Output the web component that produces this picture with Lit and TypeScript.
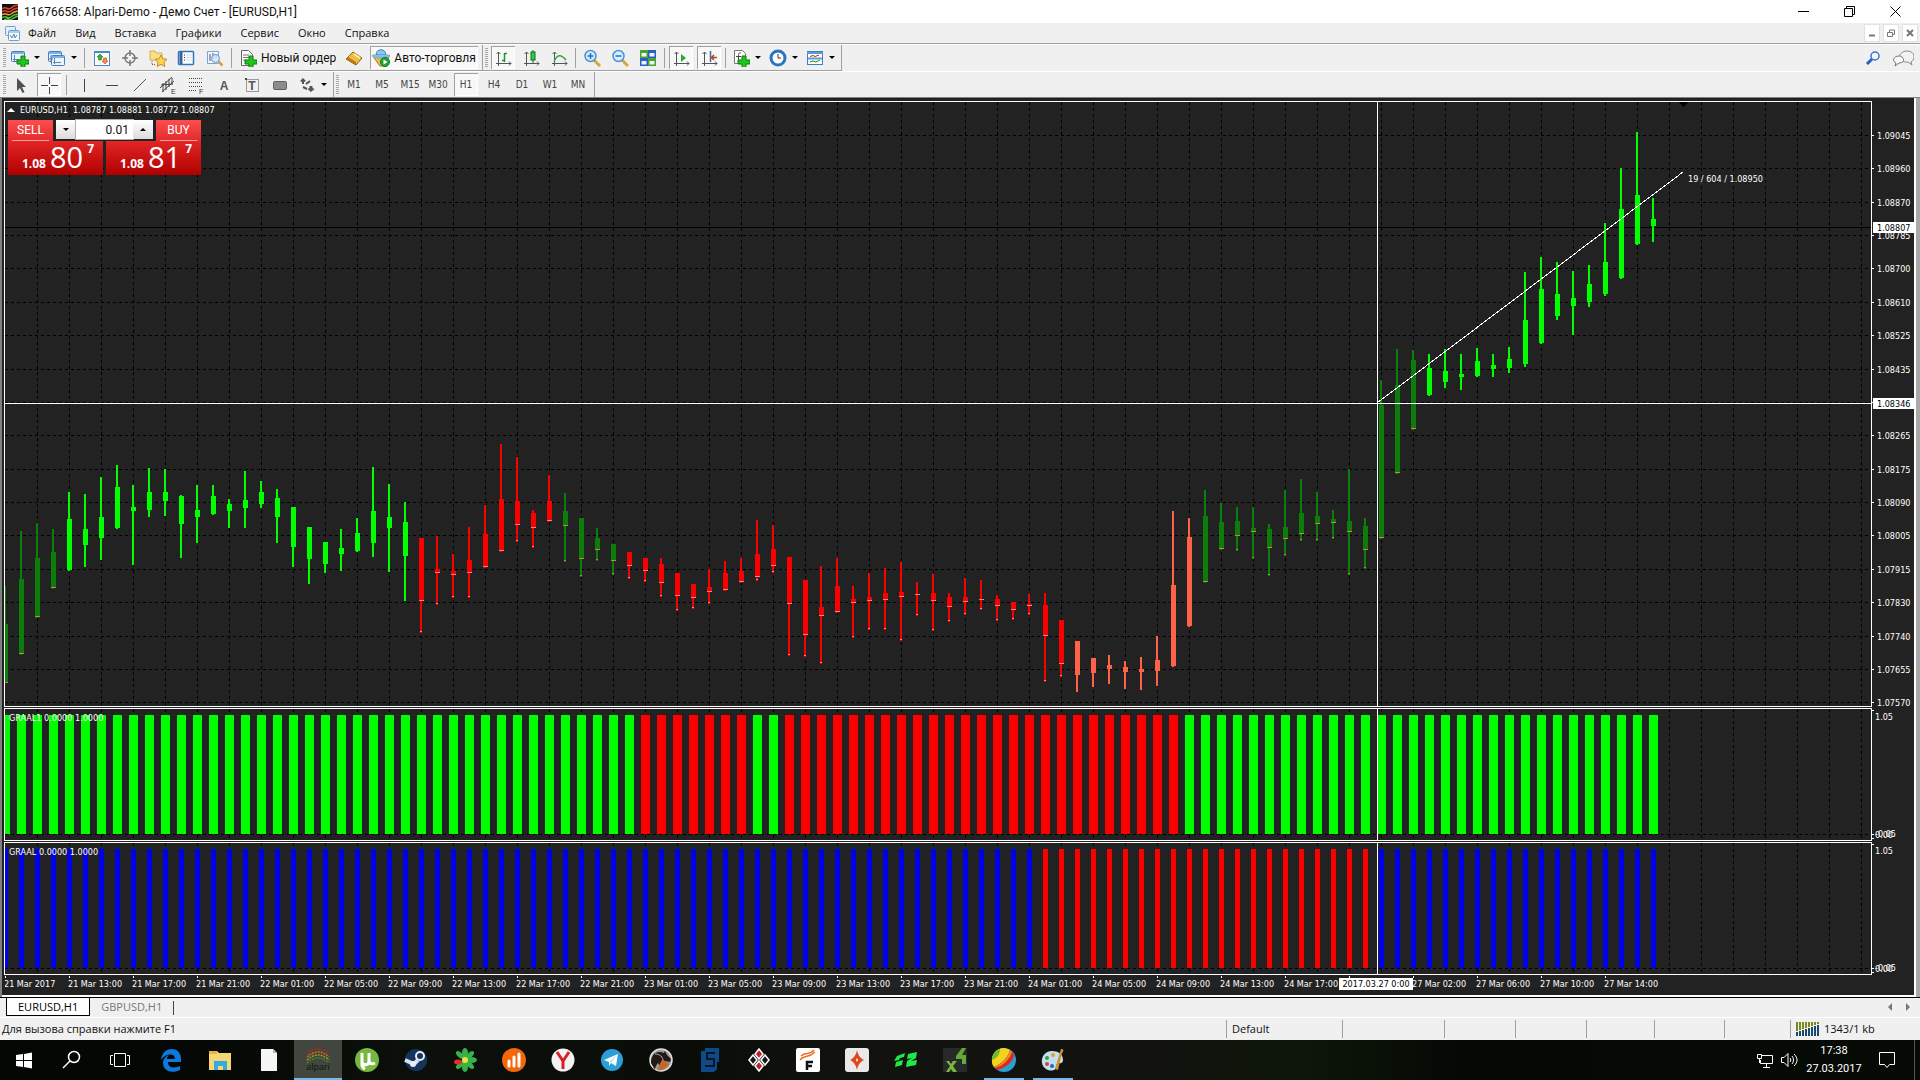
import { LitElement, html, svg, css, nothing, TemplateResult } from "lit";
import { customElement, property, state } from "lit/decorators.js";
import { classMap } from "lit/directives/class-map.js";

type Tone = "forest" | "lime" | "red" | "tomato";
type Candle = [high: number, top: number, bottom: number, low: number];

const STEP = 16;
const GRID_STEP = 32;

/* Runs of candles sharing one trend colour, in pane pixels. */
const RUNS: [Tone, Candle[]][] = [
  ["forest", [[586, 624, 683, 683], [531, 579, 654, 655], [523, 558, 617, 618], [529, 552, 588, 589]]],
  ["lime", [
    [492, 519, 570, 571], [494, 529, 545, 567], [477, 517, 538, 560], [465, 487, 528, 529], [485, 507, 511, 565],
    [468, 492, 510, 517], [469, 492, 501, 516], [495, 496, 524, 558], [485, 510, 517, 543], [485, 496, 514, 515],
    [499, 504, 511, 528], [471, 500, 508, 528], [481, 492, 504, 508], [489, 498, 517, 543], [507, 507, 547, 567],
    [527, 527, 559, 584], [542, 542, 564, 573], [529, 548, 554, 571], [518, 533, 551, 552], [467, 511, 543, 557],
    [484, 517, 528, 572], [502, 522, 556, 601],
  ]],
  ["red", [
    [538, 538, 601, 633], [536, 569, 573, 605], [554, 571, 575, 598], [527, 560, 573, 598], [505, 534, 567, 568],
    [444, 499, 551, 552], [457, 501, 525, 542], [510, 513, 528, 548], [475, 501, 521, 522],
  ]],
  ["forest", [[493, 511, 526, 562], [518, 518, 559, 577], [528, 538, 550, 561], [544, 544, 561, 575]]],
  ["red", [
    [552, 552, 566, 579], [558, 558, 571, 582], [558, 564, 583, 597], [573, 573, 596, 611], [584, 584, 598, 609],
    [569, 587, 592, 604], [561, 573, 590, 591], [558, 571, 582, 583], [520, 554, 577, 581], [525, 549, 566, 573],
    [557, 557, 604, 656], [580, 580, 635, 657], [566, 607, 616, 664], [558, 586, 612, 613], [586, 599, 603, 638],
    [573, 597, 601, 630], [568, 593, 600, 630], [562, 592, 597, 641], [582, 594, 595, 616], [574, 593, 601, 631],
    [593, 597, 607, 622], [578, 597, 602, 615], [580, 599, 600, 610], [595, 599, 606, 621], [602, 602, 610, 620],
    [594, 604, 606, 615], [593, 605, 636, 682], [620, 620, 664, 677],
  ]],
  ["tomato", [
    [641, 641, 675, 692], [658, 658, 673, 687], [655, 665, 669, 684], [661, 667, 672, 689], [657, 669, 672, 690],
    [636, 660, 671, 686], [511, 585, 666, 667], [518, 537, 626, 627],
  ]],
  ["forest", [
    [490, 516, 582, 583], [503, 522, 549, 550], [507, 521, 536, 551], [507, 528, 532, 559], [524, 529, 548, 576],
    [490, 527, 539, 556], [479, 513, 534, 541], [492, 516, 524, 541], [510, 519, 523, 539], [469, 521, 532, 575],
    [518, 526, 550, 569], [380, 405, 538, 539], [349, 385, 473, 474], [350, 360, 429, 430],
  ]],
  ["lime", [
    [354, 368, 395, 396], [349, 371, 382, 388], [354, 374, 377, 390], [348, 361, 376, 377], [354, 365, 369, 377],
    [347, 359, 368, 373], [272, 320, 364, 367], [257, 289, 343, 344], [262, 294, 316, 320], [271, 298, 306, 335],
    [265, 284, 302, 307], [223, 262, 294, 296], [168, 209, 278, 279], [132, 195, 244, 245], [198, 219, 226, 242],
  ]],
];

const PRICES: [string, number][] = [
  ["1.09045", 135], ["1.08960", 168], ["1.08870", 202], ["1.08785", 235], ["1.08700", 268], ["1.08610", 302],
  ["1.08525", 335], ["1.08435", 369], ["", 402], ["1.08265", 435], ["1.08175", 469], ["1.08090", 502],
  ["1.08005", 535], ["1.07915", 569], ["1.07830", 602], ["1.07740", 636], ["1.07655", 669], ["1.07570", 702],
];

const TIMES = [
  "21 Mar 2017", "21 Mar 13:00", "21 Mar 17:00", "21 Mar 21:00", "22 Mar 01:00", "22 Mar 05:00", "22 Mar 09:00",
  "22 Mar 13:00", "22 Mar 17:00", "22 Mar 21:00", "23 Mar 01:00", "23 Mar 05:00", "23 Mar 09:00", "23 Mar 13:00",
  "23 Mar 17:00", "23 Mar 21:00", "24 Mar 01:00", "24 Mar 05:00", "24 Mar 09:00", "24 Mar 13:00", "24 Mar 17:00",
  "", "27 Mar 02:00", "27 Mar 06:00", "27 Mar 10:00", "27 Mar 14:00",
];

/* [colour class, number of bars] */
const GRAAL1: [string, number][] = [["lime", 40], ["red", 7], ["lime", 2], ["red", 25], ["lime", 30]];
const GRAAL: [string, number][] = [["blue", 65], ["red", 21], ["blue", 18]];

const CROSS_X = 1372;
const TOP = 102;

const plusBig = svg`<path d="M10 7h4v4h4v4h-4v4h-4v-4H6v-4h4z" fill="#1fc61f" stroke="#0a7d0a"/>`;
const axes = svg`<path d="M4.500 3v14M2 14.500h15M2.500 5l2-2 2 2M15 12.500l2 2-2 2" fill="none" stroke="#555"/>`;
const winBack = (x: number, y: number) => svg`<rect x=${x + 0.5} y=${y + 0.5} width="13" height="10" rx="1" fill="#e9f4ff" stroke="#3f7fbf"/><path d=${`M${x + 1} ${y + 2}h12`} stroke="#7db1e3" stroke-width="2"/>`;

const ICONS: Record<string, TemplateResult> = {
  newChart: svg`${winBack(0, 2)}<path d="M3.500 6v6M2 10.500h6" stroke="#5d86b0"/>${plusBig}`,
  profiles: svg`${winBack(0, 2)}${winBack(3, 6)}<path d="M3 6v6M1 10h4M6.500 9v6M5 13.500h8" stroke="#5d86b0"/>`,
  market: svg`<rect x="1.500" y="2.500" width="15" height="14" fill="#fff" stroke="#4b8ac9"/><path d="M1 3h16" stroke="#4b8ac9" stroke-width="2"/><path d="M7 5l3 3H8.500v3h-3V8H4z" fill="#35b335" stroke="#1c7d1c" stroke-width=".6"/><path d="M12 15l-3-3h1.500V9h3v3H15z" fill="#f58b4a" stroke="#b84a12" stroke-width=".6"/>`,
  target: svg`<circle cx="9" cy="9" r="5" fill="none" stroke="#777" stroke-width="1.500"/><path d="M9 1v6M9 11v6M1 9h6M11 9h6" stroke="#777" stroke-width="1.500"/>`,
  favorites: svg`<path d="M1 2h5l1 2h6v7H1z" fill="#f7e08c" stroke="#d9ae45"/><path d="M3 12v4M3 15.500h4" stroke="#666" stroke-dasharray="1 1"/><path d="M12 6l1.800 3.800 4.200.5-3 2.900.8 4.200-3.800-2-3.800 2 .8-4.200-3-2.900 4.200-.5z" fill="#ffd54a" stroke="#c08a20"/>`,
  navigator: svg`<rect x="1.500" y="2.500" width="15" height="13" rx="1" fill="#fff" stroke="#2e76bd" stroke-width="1.500"/><path d="M4 3v12" stroke="#3a5f9a" stroke-width="3"/><path d="M7 6h1M7 8.500h1M7 11h1" stroke="#333"/><path d="M9 6h6M9 8.500h6M9 11h6" stroke="#cfe0f1"/>`,
  tester: svg`<path d="M2.500 2.500h11v12h-11z" fill="#eef5fc" stroke="#7aa5d0"/><path d="M5 5v7M8 4v6M11 5v4" stroke="#557"/><circle cx="10.500" cy="9.500" r="4" fill="#cfe6fb" fill-opacity=".8" stroke="#6b9cc9"/><path d="M13.500 12.500l4 4" stroke="#d3a035" stroke-width="2.500"/>`,
  order: svg`<path d="M2.500 1.500h7l4 4v11h-11z" fill="#fff" stroke="#666"/><path d="M4 6h6M4 8.500h6M4 11h4" stroke="#777"/>${plusBig}`,
  book: svg`<path d="M1 10l7-7 9 6-6 7z" fill="#f0bd3c" stroke="#946311"/><path d="M1 10l10 6v-3L3 8z" fill="#b57a17"/><path d="M9 5l6 4" stroke="#fff0ae" stroke-width="2"/>`,
  expert: svg`<path d="M0 6c3 4 15 4 18 0l-6 11H8z" fill="#e9bd4d" stroke="#a3781b"/><path d="M4 6c0-7 10-7 10 0z" fill="#8cc8ef" stroke="#3783b8"/><path d="M1 6c3 3 13 3 16 0" stroke="#7abce4" stroke-width="2.500" fill="none"/><circle cx="13" cy="13" r="4.500" fill="#22a83a" stroke="#0b7a1e"/><path d="M11.500 10.500l4 2.500-4 2.500z" fill="#fff"/>`,
  bars: svg`${axes}<path d="M10.500 4v9M10.500 4.500H13M8 11.500h2.500" stroke="#1a9a2a" stroke-width="1.500" fill="none"/>`,
  candles: svg`${axes}<path d="M11 1v13" stroke="#116b1c"/><rect x="9" y="3" width="4" height="8" fill="#2bd040" stroke="#116b1c"/>`,
  line: svg`${axes}<path d="M4 13c3-8 7-8 12-2" stroke="#35a345" stroke-width="1.500" fill="none"/>`,
  zoomIn: svg`<path d="M11 11l6 6" stroke="#d2aa36" stroke-width="3"/><circle cx="7.500" cy="7" r="5.500" fill="#d6ecff" stroke="#4d93d3" stroke-width="1.500"/><path d="M4.500 7h6M7.500 4v6" stroke="#2a72b8" stroke-width="1.500"/>`,
  zoomOut: svg`<path d="M11 11l6 6" stroke="#d2aa36" stroke-width="3"/><circle cx="7.500" cy="7" r="5.500" fill="#d6ecff" stroke="#4d93d3" stroke-width="1.500"/><path d="M4.500 7h6" stroke="#2a72b8" stroke-width="1.500"/>`,
  tiles: svg`<path d="M1 1h8v8H1zM9 9h8v8H9z" fill="#4aa52a"/><path d="M9 1h8v8H9zM1 9h8v8H1z" fill="#2a5fc4"/><path d="M2.500 4h5v3.500h-5zM10.500 4h5v3.500h-5zM2.500 12h5v3.500h-5zM10.500 12h5v3.500h-5z" fill="#eaf3ff"/>`,
  scroll: svg`${axes}<path d="M9 5l5 4-5 4z" fill="#1fae35"/>`,
  shift: svg`${axes}<path d="M10.500 2v11" stroke="#2f6fb5" stroke-width="1.500"/><path d="M17 8.500h-5M14 6l-2.500 2.500L14 11" stroke="#b4441a" stroke-width="1.500" fill="none"/>`,
  indicator: svg`<path d="M2.500 1.500h8l3 3v10h-11z" fill="#fff" stroke="#777"/><path d="M9 4c-2-1-2.500 1-2.500 3v5M4 7.500h5" stroke="#444" fill="none"/>${plusBig}`,
  period: svg`<circle cx="9" cy="9" r="7" fill="#fff" stroke="#2a74c0" stroke-width="3"/><path d="M9 5v4h3" stroke="#333" fill="none"/>`,
  template: svg`<rect x="1.500" y="2.500" width="15" height="13" fill="#fff" stroke="#3f7fbf"/><path d="M1 4h16M2 9.500h14" stroke="#5b9bd8" stroke-width="2"/><path d="M4 7.500l3-1 2 1 4-1.500" stroke="#933" fill="none"/><path d="M4 13l3-1 3 1 4-2" stroke="#282" fill="none"/>`,
  search: svg`<path d="M3 15l5-5" stroke="#2a5fc4" stroke-width="3"/><circle cx="11" cy="7" r="4" fill="#f4f9ff" stroke="#3b74d4" stroke-width="1.500"/>`,
  cursor: svg`<path d="M5 2v13l3-3 2.500 5 2-1-2.500-5h4z" fill="#505050"/>`,
  cross: svg`<path d="M9.500 1v7M9.500 11v7M1 9.500h7M11 9.500h7" stroke="#444"/>`,
  vline: svg`<path d="M9.500 3v13" stroke="#444"/>`,
  hline: svg`<path d="M3 9.500h12" stroke="#444"/>`,
  trend: svg`<path d="M3 15L15 3" stroke="#555"/>`,
  channel: svg`<path d="M1 12L13 1M3 16L15 5M4 7v9M7 5v9M10 3v8M13 2v6M2 9l12-1" stroke="#444"/><text class="tiny" x="12" y="18">E</text>`,
  fibo: svg`<path d="M2 2.500h14M2 6.500h14M2 10.500h14M2 14.500h8" stroke="#444" stroke-dasharray="1 1"/><text class="tiny" x="12" y="18">F</text>`,
  letter: svg`<text class="glyph" x="9" y="14" text-anchor="middle">A</text>`,
  label: svg`<rect x="3.500" y="3.500" width="12" height="12" fill="none" stroke="#444" stroke-dasharray="1 1"/><path d="M2 2h2v2H2z" fill="#444"/><text class="glyph" x="9" y="14" text-anchor="middle">T</text>`,
  rect: svg`<rect x="2.500" y="5.500" width="13" height="8" rx="1" fill="#8c8c8c" stroke="#5e5e5e"/>`,
  arrows: svg`<path d="M5 2l3 3-2 1v2H4V6L2 5z" fill="#555"/><path d="M13 16l3.500-3-2-1v-2h-3v2l-2 1z" fill="#555"/><path d="M8 8l4-3M5 11l4 2" stroke="#555" stroke-width="2"/>`,
};

const bigIcon = (body: TemplateResult) => html`<svg class="app-icon" viewBox="0 0 24 24" aria-hidden="true">${body}</svg>`;

const TASKS: { name: string; art: TemplateResult; state?: string }[] = [
  { name: "Edge", art: svg`<path d="M2 12C3 4 8 1 13 1c6 0 9 5 9 10v3H9c0 7 8 6 12 4v4c-8 4-17 1-17-7 0-4 3-7 6-8-2 2-2 3-2 4h8c0-6-9-6-14 1z" fill="#0a7bdc"/>` },
  { name: "Explorer", art: svg`<path d="M1 3h8l2 2h12v17H1z" fill="#f5d876"/><path d="M1 3h8v3H1z" fill="#e5b93c"/><path d="M6 13h13v9h-4v-4h-5v4H6z" fill="#36a9e0"/>` },
  { name: "Document", art: svg`<path d="M4 1h12l4 4v18H4z" fill="#f5f5f5"/><path d="M16 1v4h4z" fill="#bbb"/>` },
  { name: "Alpari", state: "active", art: svg`<path d="M1 6Q12-4 23 6" stroke="#b3261e" fill="none" stroke-width="1.500" stroke-dasharray="2 1"/><path d="M1 9Q12-1 23 9" stroke="#d06a20" fill="none" stroke-width="1.500" stroke-dasharray="2 1"/><path d="M1 12Q12 2 23 12" stroke="#9c9c20" fill="none" stroke-width="1.500" stroke-dasharray="2 1"/><path d="M1 15Q12 5 23 15" stroke="#3c8a2a" fill="none" stroke-width="1.500" stroke-dasharray="2 1"/><text class="brand" x="12" y="22" text-anchor="middle">alpari</text>` },
  { name: "uTorrent", art: svg`<circle cx="12" cy="12" r="12" fill="#76b83f"/><path d="M7 5v8c0 5 7 5 7 0V5M14 12c0 5 4 4 6 3M7 10c0 6-1 9 3 11" stroke="#fff" stroke-width="3" fill="none"/>` },
  { name: "Steam", art: svg`<circle cx="12" cy="12" r="11" fill="#15345e"/><path d="M1 12l9 4 4-4" stroke="#d8e2ee" stroke-width="4" fill="none"/><circle cx="16" cy="8" r="4" fill="#15345e" stroke="#e8eef5" stroke-width="2"/><circle cx="9" cy="16" r="3" fill="#e8eef5"/>` },
  { name: "ICQ", art: svg`<g fill="#35b34a"><ellipse cx="12" cy="5" rx="3" ry="5"/><ellipse cx="12" cy="19" rx="3" ry="5"/><ellipse cx="19" cy="12" rx="5" ry="3"/><ellipse cx="17" cy="7" rx="2.500" ry="5" transform="rotate(45 17 7)"/><ellipse cx="17" cy="17" rx="2.500" ry="5" transform="rotate(-45 17 17)"/><ellipse cx="7" cy="17" rx="2.500" ry="5" transform="rotate(45 7 17)"/><ellipse cx="7" cy="7" rx="2.500" ry="5" transform="rotate(-45 7 7)"/></g><ellipse cx="5" cy="14" rx="4" ry="2.500" fill="#e0302a"/><circle cx="12" cy="12" r="3" fill="#f4e03a"/>` },
  { name: "Analytics", art: svg`<circle cx="12" cy="12" r="12" fill="#f4660a"/><path d="M7 18v-5M12 18V9M17 18V6" stroke="#fff" stroke-width="3" stroke-linecap="round"/>` },
  { name: "Yandex", art: svg`<circle cx="12" cy="12" r="11.500" fill="#f3f3f3"/><path d="M6 4l6 9 6-9M12 12v9" stroke="#d8202a" stroke-width="3" fill="none"/>` },
  { name: "Telegram", art: svg`<circle cx="12" cy="12" r="11" fill="#2c9fd8"/><path d="M4 12l14-6-2 12-5-3-2 3v-4z" fill="#fff"/><path d="M9 14l8-7-6 8z" fill="#b8dcf0"/>` },
  { name: "Stallion", art: svg`<circle cx="12" cy="12" r="11" fill="#9a9a9a" stroke="#ddd" stroke-width="1.500"/><path d="M2 15c0-9 6-13 13-10l1-2 2 4 4 4-1 3-5-1-5 9H9c3-3 2-5 0-7-2 2-3 5-3 7z" fill="#241812"/><path d="M8 22c4-4 2-8 6-10l6 3c-1 4-6 8-12 7z" fill="#c4682a"/><path d="M6 6c5 0 8 3 8 7" stroke="#aaa" fill="none"/>` },
  { name: "S5", art: svg`<path d="M7 0h14v14h-2v7l-3 3H3V3h4z" fill="#0c4a8a"/><path d="M17 5H9v6h7v7H7" stroke="#0b1420" stroke-width="2" fill="none"/>` },
  { name: "Cards", art: svg`<g stroke="#fff" stroke-width="1.500"><path d="M12 1l4 5-4 5-4-5z" fill="#c3202a"/><path d="M12 13l4 5-4 5-4-5z" fill="#c3202a"/><path d="M6 7l4 5-4 5-4-5z" fill="#181818"/><path d="M18 7l4 5-4 5-4-5z" fill="#181818"/></g>` },
  { name: "Forex", art: svg`<rect width="24" height="24" rx="2" fill="#fff"/><path d="M4 12c4-6 8-1 15-8M5 8c5-5 8 0 13-6" stroke="#e8702a" stroke-width="1.500" fill="none"/><path d="M11 22v-8h6M11 18h5" stroke="#111" stroke-width="2.500" fill="none"/>` },
  { name: "Spark", art: svg`<rect width="24" height="24" rx="3" fill="#e9e9e9"/><path d="M12 2c1 5 3 8 7 10-4 2-6 5-7 10-1-5-3-8-7-10 4-2 6-5 7-10z" fill="#e0461e"/><path d="M12 10l1 2-1 2-1-2z" fill="#fff"/>` },
  { name: "FX", art: svg`<path d="M3 8l8-3-1 4-4 1-1 2-5 1zM2 14l7-2-1 5-7 2zM14 6l9-2-1 6-5 3 6-1-1 5-10 2 1-6 5-3-5 1z" fill="#1fe84a"/>` },
  { name: "X4", art: svg`<rect width="24" height="24" fill="#262a2a"/><path d="M3 13h3l2 3 2-3h4l-4 5 4 6h-4l-2-3-2 3H3l4-6z" fill="#7ab83a"/><path d="M19 0h4l-4 7h4v9h-4v-5h-6V8z" fill="#66a83a"/>` },
  { name: "Stripe", state: "running", art: svg`<circle cx="12" cy="12" r="12" fill="#2a9fd0"/><path d="M12 0C4 0-1 7 0 14c0 2 1 4 2 5C10 16 17 8 18 2c-2-1-4-2-6-2z" fill="#f4d21e"/><path d="M8 1C3 3 0 7 0 12c5-2 8-6 8-11z" fill="#6cb82e"/><path d="M18 2C17 8 10 16 2 19l3 3C14 20 22 13 22 6z" fill="#e0281e"/><path d="M18 2c-1 5-6 12-13 16l-3 1 1 1C11 18 18 11 20 4z" fill="#ee8a1e"/>` },
  { name: "Paint", state: "running", art: svg`<path d="M11 3C4 3 0 9 1 15c1 6 8 9 12 7 3-1 1-4 3-6 2-1 6 0 6-4 0-6-5-9-11-9z" fill="#bfe0f2"/><circle cx="6" cy="10" r="2" fill="#3a9a3a"/><circle cx="6" cy="16" r="2" fill="#e04030"/><circle cx="12" cy="7" r="2" fill="#e8a020"/><circle cx="11" cy="18" r="2" fill="#3060c0"/><path d="M20 1c3 0 3 2 1 4L17 22l-3-1L19 4z" fill="#d09030"/>` },
];

@customElement("chart-pane")
export class ChartPane extends LitElement {
  @property() kind: "price" | "bars" = "bars";
  @property() heading = "";
  @property({ attribute: false }) bars: [string, number][] = [];
  @property({ type: Number }) thickness = 9;

  static styles = css`
    :host { display: grid; grid-template-columns: minmax(0, 1fr) 42px; min-height: 0; }
    .plot { border: 1px solid #fff; position: relative; overflow: hidden; min-width: 0; }
    .surface, .axis { display: block; width: 100%; height: 100%; }
    .axis-box { position: relative; min-height: 0; }
    .surface { position: absolute; inset: 0; }
    .axis { position: absolute; inset: 0; overflow: visible; }
    .grid { stroke: #000; stroke-dasharray: 3 3; }
    .bid { stroke: #000; }
    .cross { stroke: #fff; }
    .forest { fill: #0a7d0a; }
    .lime { fill: #00ff00; }
    .red { fill: #fb0000; }
    .tomato { fill: #ff6347; }
    .blue { fill: #0000f0; }
    .tip-forest { fill: #c8863c; }
    .tip-red { fill: #ff8080; }
    text, .heading { font: 9px/12px "DejaVu Sans Condensed", "DejaVu Sans", sans-serif; }
    text { fill: #fff; }
    .dark { fill: #000; }
    .tag { fill: #fff; }
    .heading { position: absolute; left: 4px; top: 3px; color: #fff; }
  `;

  private gridLines() {
    const lines: TemplateResult[] = [];
    for (let x = GRID_STEP; x < 3840; x += GRID_STEP) {
      lines.push(svg`<line class="grid" x1=${x + 0.5} x2=${x + 0.5} y1="0" y2="100%"></line>`);
    }
    return lines;
  }

  private candles() {
    let i = 0;
    return RUNS.map(([tone, list]) => list.map(([high, top, bottom, low]) => {
      const x = STEP * i++;
      const tip = tone === "red" || tone === "forest";
      return svg`
        <rect class=${tone} x=${x - 1} y=${high - TOP} width="2" height=${low - high}></rect>
        <rect class=${tone} x=${x - 2} y=${top - TOP} width="5" height=${bottom - top}></rect>
        ${tip ? svg`<rect class=${"tip-" + tone} x=${x - 2} y=${bottom - TOP - 1} width="5" height="1"></rect>` : nothing}
        ${tip && low - bottom > 2 ? svg`<rect class=${"tip-" + tone} x=${x - 1} y=${low - TOP - 2} width="2" height="1"></rect>` : nothing}`;
    }));
  }

  private histogram() {
    let i = 0;
    const half = (this.thickness - 1) / 2;
    return this.bars.map(([tone, count]) => Array.from({ length: count }, () =>
      svg`<rect class=${tone} x=${STEP * i++ - half} y="6" width=${this.thickness} height="119"></rect>`));
  }

  private renderPrice() {
    return html`
      <div class="plot">
        <svg class="surface" shape-rendering="crispEdges" role="img" aria-label="EURUSD H1">
          ${this.gridLines()}
          ${PRICES.map(([, y]) => svg`<line class="grid" x1="0" x2="100%" y1=${y - TOP + 0.5} y2=${y - TOP + 0.5}></line>`)}
          <line class="bid" x1="0" x2="100%" y1="125.500" y2="125.500"></line>
          ${this.candles()}
          <path d="M1673 0h10l-5 5z"></path>
          <line class="cross" x1=${CROSS_X + 0.5} x2=${CROSS_X + 0.5} y1="0" y2="100%"></line>
          <line class="cross" x1="0" x2="100%" y1="301.500" y2="301.500"></line>
          <line class="cross" x1=${CROSS_X} x2="1678" y1="301" y2="70"></line>
          <text x="1683" y="80">19 / 604 / 1.08950</text>
        </svg>
      </div>
      <div class="axis-box">
        <svg class="axis" shape-rendering="crispEdges">
          ${PRICES.map(([label, y]) => svg`
            <line class="cross" x1="0" x2="2" y1=${y - 100.5} y2=${y - 100.5}></line>
            <text x="5" y=${y - 97}>${label}</text>`)}
          <rect class="tag" x="1" y="121" width="41" height="11"></rect>
          <text class="dark" x="5" y="130">1.08807</text>
          <rect class="tag" x="1" y="297" width="41" height="11"></rect>
          <text class="dark" x="5" y="306">1.08346</text>
        </svg>
      </div>`;
  }

  private renderBars() {
    return html`
      <div class="plot">
        <svg class="surface" shape-rendering="crispEdges" role="img" aria-label=${this.heading}>
          ${this.gridLines()}
          <line class="grid" x1="0" x2="100%" y1="125.500" y2="125.500"></line>
          ${this.histogram()}
          <line class="cross" x1=${CROSS_X + 0.5} x2=${CROSS_X + 0.5} y1="0" y2="100%"></line>
        </svg>
        <div class="heading">${this.heading}</div>
      </div>
      <div class="axis-box">
        <svg class="axis" shape-rendering="crispEdges">
          <path class="cross" d="M0 2.500h2M0 126.500h2M0 130.500h2"></path>
          <text x="3" y="12">1.05</text>
          <text x="3" y="130">0.00</text>
          <text x="3" y="129">-0.05</text>
        </svg>
      </div>`;
  }

  render() {
    return this.kind === "price" ? this.renderPrice() : this.renderBars();
  }
}

@customElement("app-root")
export class AppRoot extends LitElement {
  @state() private timeframe = "H1";
  @state() private volume = "0.01";

  static styles = css`
    :host {
      display: flex; flex-direction: column; min-height: 100vh; background: #f0f0f0; color: #111;
      font: 11px/16px "Open Sans", "Noto Sans", sans-serif; overflow: hidden;
    }
    button, input { font: inherit; color: inherit; border: 0; padding: 0; margin: 0; background: none; border-radius: 0; }
    svg { display: block; flex: none; }
    .titlebar { display: flex; align-items: center; height: 23px; background: #fff; padding-left: 2px; padding-right: 2px; }
    .titlebar .logo { width: 16px; height: 16px; margin-right: 6px; }
    .caption { flex: 1; font: 12px/16px Roboto, sans-serif; margin: 0; }
    .win { display: flex; }
    .win button { width: 46px; height: 23px; display: grid; place-items: center; }
    .win svg { width: 11px; height: 11px; }
    .menubar { display: flex; align-items: center; height: 20px; padding-left: 5px; border-bottom: 1px solid #a0a0a0; }
    .menubar .doc { width: 15px; height: 15px; margin-right: 8px; }
    .menus { display: flex; flex: 1; gap: 19px; }
    .mdi { display: flex; gap: 3px; padding-right: 2px; }
    .mdi button { width: 16px; height: 18px; background: #fff; border: 1px solid #e2e2e2; display: grid; place-items: center; }
    .mdi svg { width: 8px; height: 8px; }
    .toolbar { display: flex; align-items: center; height: 26px; border-top: 1px solid #fff; font: 12px/16px Roboto, sans-serif; }
    .toolbar.second { height: 25px; }
    .group { display: flex; align-items: center; height: 26px; padding-left: 2px; padding-right: 2px; border-right: 1px solid #a0a0a0; border-bottom: 1px solid #a0a0a0; box-sizing: border-box; }
    .group.low { height: 25px; border-bottom: 0; }
    .group:first-child { padding-left: 3px; }
    .grip { width: 3px; height: 20px; margin-right: 1px; background: repeating-linear-gradient(#a8a8a8 0 1px, #f0f0f0 1px 2px); }
    .tool { display: flex; align-items: center; justify-content: center; min-width: 24px; height: 23px; margin: 0 2px; box-sizing: border-box; }
    .tool svg { width: 18px; height: 18px; }
    .tool.drop { min-width: 33px; gap: 5px; }
    .tool.wide { gap: 4px; padding: 0 2px; }
    .tool.on { background: #f8f8f8; box-shadow: inset 1px 1px #a0a0a0, inset -1px -1px #fff; }
    .caret { width: 0; height: 0; border: 3px solid transparent; border-top-color: #000; border-bottom: 0; }
    .sep { width: 1px; height: 20px; margin: 0 3px; background: #a0a0a0; }
    .tf { font: 10px/16px "DejaVu Sans Condensed", "DejaVu Sans", sans-serif; color: #444; }
    .tiny { font: 7px "Liberation Sans", sans-serif; fill: #333; }
    .glyph { font: bold 12px "Liberation Sans", sans-serif; fill: #555; }
    .group.charts .sep { margin: 0 2px; }
    .tools-right { margin-left: auto; display: flex; gap: 8px; padding-right: 6px; }
    .tools-right svg { width: 22px; height: 18px; }
    .desk { flex: 1; display: flex; border-top: 1px solid #808080; border-left: 2px solid #808080; background: #a8a8a8; min-height: 0; }
    .chart {
      flex: 1; min-width: 0; margin-right: 4px; background: #222; border-right: 2px solid #fff; border-bottom: 2px solid #fff;
      padding: 3px 0 0 2px; display: grid; grid-template-rows: minmax(606px, 1fr) 133px 133px 19px; row-gap: 1px; position: relative;
    }
    .times { display: flex; position: relative; margin: 0 42px 0 1px; overflow: hidden; }
    .times span, .now { font: 9px/13px "DejaVu Sans Condensed", "DejaVu Sans", sans-serif; white-space: nowrap; }
    .times span { width: 64px; flex: none; color: #fff; margin-left: -1px; margin-right: 1px; }
    .times span::before { content: ""; display: block; width: 1px; height: 2px; background: #fff; margin-left: 1px; }
    .now { position: absolute; left: 1334px; top: 2px; width: 74px; height: 12px; line-height: 12px; background: #fff; color: #000; text-align: center; }
    .quote { position: absolute; left: 5px; top: 6px; display: flex; align-items: center; gap: 5px; color: #fff; font: 9px/12px "DejaVu Sans Condensed", "DejaVu Sans", sans-serif; white-space: pre; }
    .quote::before { content: ""; border: 4px solid transparent; border-top: 0; border-bottom-color: #fff; }
    .deal { position: absolute; left: 6px; top: 22px; display: flex; gap: 3px; font: 12px/16px Roboto, sans-serif; }
    .side { width: 95px; height: 55px; display: flex; flex-direction: column; color: #fff; background: linear-gradient(#ff4c4c, #e02c2c 38%, #e02424 40%, #b00000); }
    .side .name { width: 45px; height: 20px; box-sizing: border-box; line-height: 20px; }
    .side .name::after { content: ""; display: block; margin: 0 4px; height: 1px; background: #ff9a9a; }
    .side.buy .name { align-self: flex-end; }
    .rate { display: flex; align-items: flex-end; justify-content: center; gap: 4px; height: 33px; width: 100%; padding-left: 5px; box-sizing: border-box; }
    .rate b { font: bold 12px/18px "Open Sans", sans-serif; }
    .rate strong { font: 29px/32px "Open Sans", sans-serif; }
    .rate sup { font: bold 12px/18px "Open Sans", sans-serif; align-self: flex-start; }
    .lots { position: absolute; left: 45px; top: 0; width: 97px; height: 19px; border: 3px solid #222; border-top: 0; border-bottom-width: 2px; display: flex; background: #fff; }
    .lots button { width: 20px; height: 19px; background: linear-gradient(#fff, #dcdcdc); display: grid; place-items: center; }
    .lots input { flex: 1; min-width: 0; text-align: right; padding-right: 4px; outline: 1px solid #b0b0b0; }
    .up { border-top: 0; border-bottom: 3px solid #000; }
    .tabs { display: flex; align-items: flex-start; height: 19px; border-top: 1px solid #000; border-bottom: 1px solid #fff; padding-left: 6px; }
    .tabs button { height: 18px; box-sizing: border-box; padding: 0 11px; color: #777; }
    .tabs .current { background: #fff; color: #000; border: 1px solid #000; border-top: 0; }
    .tabs .sep { height: 14px; margin: 3px 0 0; background: #444; }
    .arrows { margin-left: auto; display: flex; gap: 14px; padding: 5px 10px 0 0; }
    .arrows i { width: 0; height: 0; border: 4px solid transparent; border-left: 0; border-right-color: #777; }
    .arrows i.next { border: 4px solid transparent; border-right: 0; border-left-color: #777; }
    .status { display: grid; grid-template-columns: minmax(0, 1fr) 116px 102px 71px 71px 68px 70px 66px 130px; height: 22px; align-items: center; }
    .status > span { height: 18px; line-height: 18px; border-left: 1px solid #a0a0a0; padding-left: 5px; display: flex; align-items: center; gap: 4px; box-sizing: border-box; }
    .status > span:first-child { border: 0; padding-left: 2px; }
    .status svg { width: 24px; height: 14px; }
    .taskbar { display: flex; height: 40px; color: #fff; background: linear-gradient(90deg, #040704 0 8%, #0b100a 22%, #0a0d07 36%, #12130f 45% 60%, #0d1608 68%, #050905 76%, #070b06); }
    .taskbar button { width: 48px; height: 40px; display: grid; place-items: center; position: relative; }
    .pins { display: flex; gap: 1px; padding-left: 3px; }
    .glyphs { display: flex; }
    .glyphs svg { width: 20px; height: 20px; }
    .app-icon { width: 24px; height: 24px; overflow: visible; }
    .pins .active { background: #41463f; box-shadow: inset 0 -2px #76b9ed; }
    .pins .running { background: linear-gradient(#76b9ed, #76b9ed) center bottom / 40px 2px no-repeat; }
    .brand { font: 9px "Open Sans", sans-serif; fill: #111; }
    .tray { margin-left: auto; display: flex; align-items: center; padding-right: 5px; }
    .tray svg { width: 18px; height: 18px; margin-right: 6px; }
    .clock { width: 60px; text-align: center; font: 11px/18px Roboto, sans-serif; }
    .tray .note { width: 46px; }
    .tray .note svg { width: 20px; height: 20px; margin: 0; }
    .edge { width: 1px; height: 40px; background: #555; margin-left: 4px; }
  `;

  private icon(name: string) {
    return html`<svg viewBox="0 0 18 18" aria-hidden="true">${ICONS[name]}</svg>`;
  }

  private tool(name: string, title: string, opts: { on?: boolean; drop?: boolean; text?: string } = {}) {
    const cls = { tool: true, on: !!opts.on, drop: !!opts.drop, wide: !!opts.text };
    return html`<button class=${classMap(cls)} aria-label=${title} aria-pressed=${opts.on ? "true" : "false"}>${this.icon(name)}${opts.text ?? nothing}${opts.drop ? html`<span class="caret"></span>` : nothing}</button>`;
  }

  private header() {
    return html`
      <header class="titlebar">
        <svg class="logo" viewBox="0 0 16 16" aria-hidden="true"><rect width="16" height="16" fill="#111"></rect>
          <path d="M0 5c4-4 5 2 9-1s4-2 7-3M0 8c4-4 5 2 9-1s4-2 7-3" stroke="#e0402a" stroke-width="1.500" fill="none"></path>
          <path d="M0 11c4-4 5 2 9-1s4-2 7-3" stroke="#e8a030" stroke-width="1.500" fill="none"></path>
          <path d="M0 14c4-4 5 2 9-1s4-2 7-3M2 16c4-3 5 1 8-1s4-2 6-3" stroke="#4fc03a" stroke-width="1.500" fill="none"></path></svg>
        <h1 class="caption">11676658: Alpari-Demo - Демо Счет - [EURUSD,H1]</h1>
        <div class="win">
          <button aria-label="Свернуть"><svg viewBox="0 0 11 11"><path d="M0 5.500h11" stroke="#000"></path></svg></button>
          <button aria-label="Восстановить"><svg viewBox="0 0 11 11"><path d="M.5 2.500h8v8h-8zM2.500 2V.5h8v8H9" fill="none" stroke="#000"></path></svg></button>
          <button aria-label="Закрыть"><svg viewBox="0 0 11 11"><path d="M.5.5l10 10M10.500.5l-10 10" stroke="#000"></path></svg></button>
        </div>
      </header>
      <nav class="menubar">
        <svg class="doc" viewBox="0 0 15 15" aria-hidden="true"><rect x=".5" y=".5" width="10" height="9" rx="1" fill="#e4f0fb" stroke="#6a9fd0"></rect><rect x="3.500" y="4.500" width="11" height="10" rx="1" fill="#f4faff" stroke="#6a9fd0"></rect><path d="M4 6h10" stroke="#6a9fd0"></path><path d="M5 9l2 3 2-4 1 4 2-3" stroke="#5a86b0" fill="none"></path></svg>
        <div class="menus">${["Файл", "Вид", "Вставка", "Графики", "Сервис", "Окно", "Справка"].map((m) => html`<button>${m}</button>`)}</div>
        <div class="mdi">
          <button aria-label="Свернуть окно"><svg viewBox="0 0 8 8"><path d="M1 6.500h6" stroke="#707a84" stroke-width="2"></path></svg></button>
          <button aria-label="Восстановить окно"><svg viewBox="0 0 8 8"><path d="M.5 3.500h5v4h-5zM2.500 3V1h5v4.500H6" fill="none" stroke="#707a84"></path></svg></button>
          <button aria-label="Закрыть окно"><svg viewBox="0 0 8 8"><path d="M1 1l6 6M7 1L1 7" stroke="#707a84" stroke-width="2"></path></svg></button>
        </div>
      </nav>`;
  }

  private toolbars() {
    const sep = html`<span class="sep"></span>`;
    const grip = html`<span class="grip"></span>`;
    return html`
      <div class="toolbar" role="toolbar" aria-label="Стандартная">
        <div class="group">${grip}
          ${this.tool("newChart", "Новый график", { drop: true })}${this.tool("profiles", "Профили", { drop: true })}${sep}
          ${this.tool("market", "Обзор рынка")}${this.tool("target", "Окно данных")}${this.tool("favorites", "Навигатор")}${this.tool("navigator", "Терминал")}${this.tool("tester", "Тестер")}${sep}
          ${this.tool("order", "Новый ордер", { text: "Новый ордер" })}${this.tool("book", "MetaEditor")}${this.tool("expert", "Авто-торговля", { text: "Авто-торговля", on: true })}
        </div>
        <div class="group charts">${grip}
          ${this.tool("bars", "Бары", { on: true })}${this.tool("candles", "Свечи")}${this.tool("line", "Линия")}${sep}
          ${this.tool("zoomIn", "Увеличить")}${this.tool("zoomOut", "Уменьшить")}${this.tool("tiles", "Окна")}${sep}
          ${this.tool("scroll", "Автопрокрутка", { on: true })}${this.tool("shift", "Сдвиг", { on: true })}${sep}
          ${this.tool("indicator", "Индикаторы", { drop: true })}${this.tool("period", "Периоды", { drop: true })}${this.tool("template", "Шаблоны", { drop: true })}
        </div>
        <div class="tools-right">
          <button aria-label="Поиск"><svg viewBox="0 0 18 18">${ICONS.search}</svg></button>
          <button aria-label="Чат"><svg viewBox="0 0 22 18"><path d="M19 13l1 3-4-3c-12 1-10-11-1-11 8 0 9 8 4 11z" fill="#f2f2f2" stroke="#888"></path><path d="M4 14l-1 3 4-3c7 0 5-7 0-7-6 0-7 5-3 7z" fill="#fafafa" stroke="#777"></path></svg></button>
        </div>
      </div>
      <div class="toolbar second" role="toolbar" aria-label="Графические инструменты">
        <div class="group low">${grip}
          ${this.tool("cursor", "Курсор")}${this.tool("cross", "Перекрестие", { on: true })}${sep}
          ${this.tool("vline", "Вертикальная линия")}${this.tool("hline", "Горизонтальная линия")}${this.tool("trend", "Трендовая линия")}${this.tool("channel", "Канал")}${this.tool("fibo", "Фибоначчи")}${this.tool("letter", "Текст")}${this.tool("label", "Метка")}${this.tool("rect", "Прямоугольник")}${this.tool("arrows", "Стрелки", { drop: true })}
        </div>
        <div class="group low">${grip}
          ${["M1", "M5", "M15", "M30", "H1", "H4", "D1", "W1", "MN"].map((t) => html`
            <button class=${classMap({ tool: true, tf: true, on: t === this.timeframe })} @click=${() => (this.timeframe = t)}>${t}</button>`)}
        </div>
      </div>`;
  }

  private stepVolume(delta: number) {
    this.volume = Math.max(0.01, Number(this.volume) + delta).toFixed(2);
  }

  private desk() {
    return html`
      <main class="desk">
        <section class="chart">
          <chart-pane kind="price"></chart-pane>
          <chart-pane heading="GRAAL1 0.0000 1.0000" .bars=${GRAAL1} thickness="9"></chart-pane>
          <chart-pane heading="GRAAL 0.0000 1.0000" .bars=${GRAAL} thickness="5"></chart-pane>
          <div class="times">${TIMES.map((t) => html`<span>${t}</span>`)}<div class="now">2017.03.27 0:00</div></div>
          <div class="quote">EURUSD,H1  1.08787 1.08881 1.08772 1.08807</div>
          <div class="deal">
            <button class="side"><span class="name">SELL</span><span class="rate"><b>1.08</b><strong>80</strong><sup>7</sup></span></button>
            <button class="side buy"><span class="name">BUY</span><span class="rate"><b>1.08</b><strong>81</strong><sup>7</sup></span></button>
            <div class="lots">
              <button aria-label="Уменьшить объем" @click=${() => this.stepVolume(-0.01)}><span class="caret"></span></button>
              <input aria-label="Объем" .value=${this.volume} @change=${(e: Event) => (this.volume = (e.target as HTMLInputElement).value)} />
              <button aria-label="Увеличить объем" @click=${() => this.stepVolume(0.01)}><span class="caret up"></span></button>
            </div>
          </div>
        </section>
      </main>`;
  }

  private footer() {
    return html`
      <div class="tabs"><button class="current">EURUSD,H1</button><button>GBPUSD,H1</button><span class="sep"></span>
        <span class="arrows"><i></i><i class="next"></i></span></div>
      <div class="status">
        <span>Для вызова справки нажмите F1</span><span>Default</span><span></span><span></span><span></span><span></span><span></span><span></span>
        <span><svg viewBox="0 0 24 14" aria-hidden="true">${[0, 3, 6, 9, 12, 15, 18, 21].map((x, i) => svg`<path d=${`M${x + 1} 0v${9 - i}`} stroke="#7a8a1a" stroke-width="2"></path><path d=${`M${x + 1} 14v${-(4 + i)}`} stroke="#1a4a6a" stroke-width="2"></path>`)}</svg>1343/1 kb</span>
      </div>
      <footer class="taskbar">
        <div class="glyphs">
          <button aria-label="Пуск"><svg viewBox="0 0 20 20"><path d="M2 5l7-1v6H2zM10 4l8-1.500V10h-8zM2 11h7v6l-7-1zM10 11h8v7.500L10 17z" fill="#fff"></path></svg></button>
          <button aria-label="Поиск"><svg viewBox="0 0 20 20"><circle cx="12" cy="7" r="5.500" fill="none" stroke="#fff" stroke-width="1.500"></circle><path d="M8 11l-7 7" stroke="#fff" stroke-width="1.500"></path></svg></button>
          <button aria-label="Представление задач"><svg viewBox="0 0 20 20"><path d="M4.500 3.500h11v13h-11zM3 5.500H.5v9H3M17 5.500h2.500v9H17" fill="none" stroke="#fff"></path></svg></button>
        </div>
        <div class="pins">${TASKS.map((t) => html`<button class=${t.state ?? "idle"} aria-label=${t.name}>${bigIcon(t.art)}</button>`)}</div>
        <div class="tray">
          <svg viewBox="0 0 18 18" aria-hidden="true"><path d="M5 4.500h11.500v8H4.500V9M10.500 13v3M7 16.500h7M1.500 3.500h4v4h-4zM3.500 8v4" fill="none" stroke="#fff"></path></svg>
          <svg viewBox="0 0 18 18" aria-hidden="true"><path d="M1.500 6.500H4l4-4v13l-4-4H1.500zM10 7c1 1 1 3 0 4M12 5c2 2 2 6 0 8M14 3c4 4 4 8 0 12" fill="none" stroke="#fff"></path></svg>
          <div class="clock">17:38<br />27.03.2017</div>
          <button class="note" aria-label="Уведомления"><svg viewBox="0 0 20 20"><path d="M2.500 2.500h15v12h-5l-2.500 3-2.500-3h-5z" fill="none" stroke="#fff"></path></svg></button>
          <span class="edge"></span>
        </div>
      </footer>`;
  }

  render() {
    return html`${this.header()}${this.toolbars()}${this.desk()}${this.footer()}`;
  }
}
